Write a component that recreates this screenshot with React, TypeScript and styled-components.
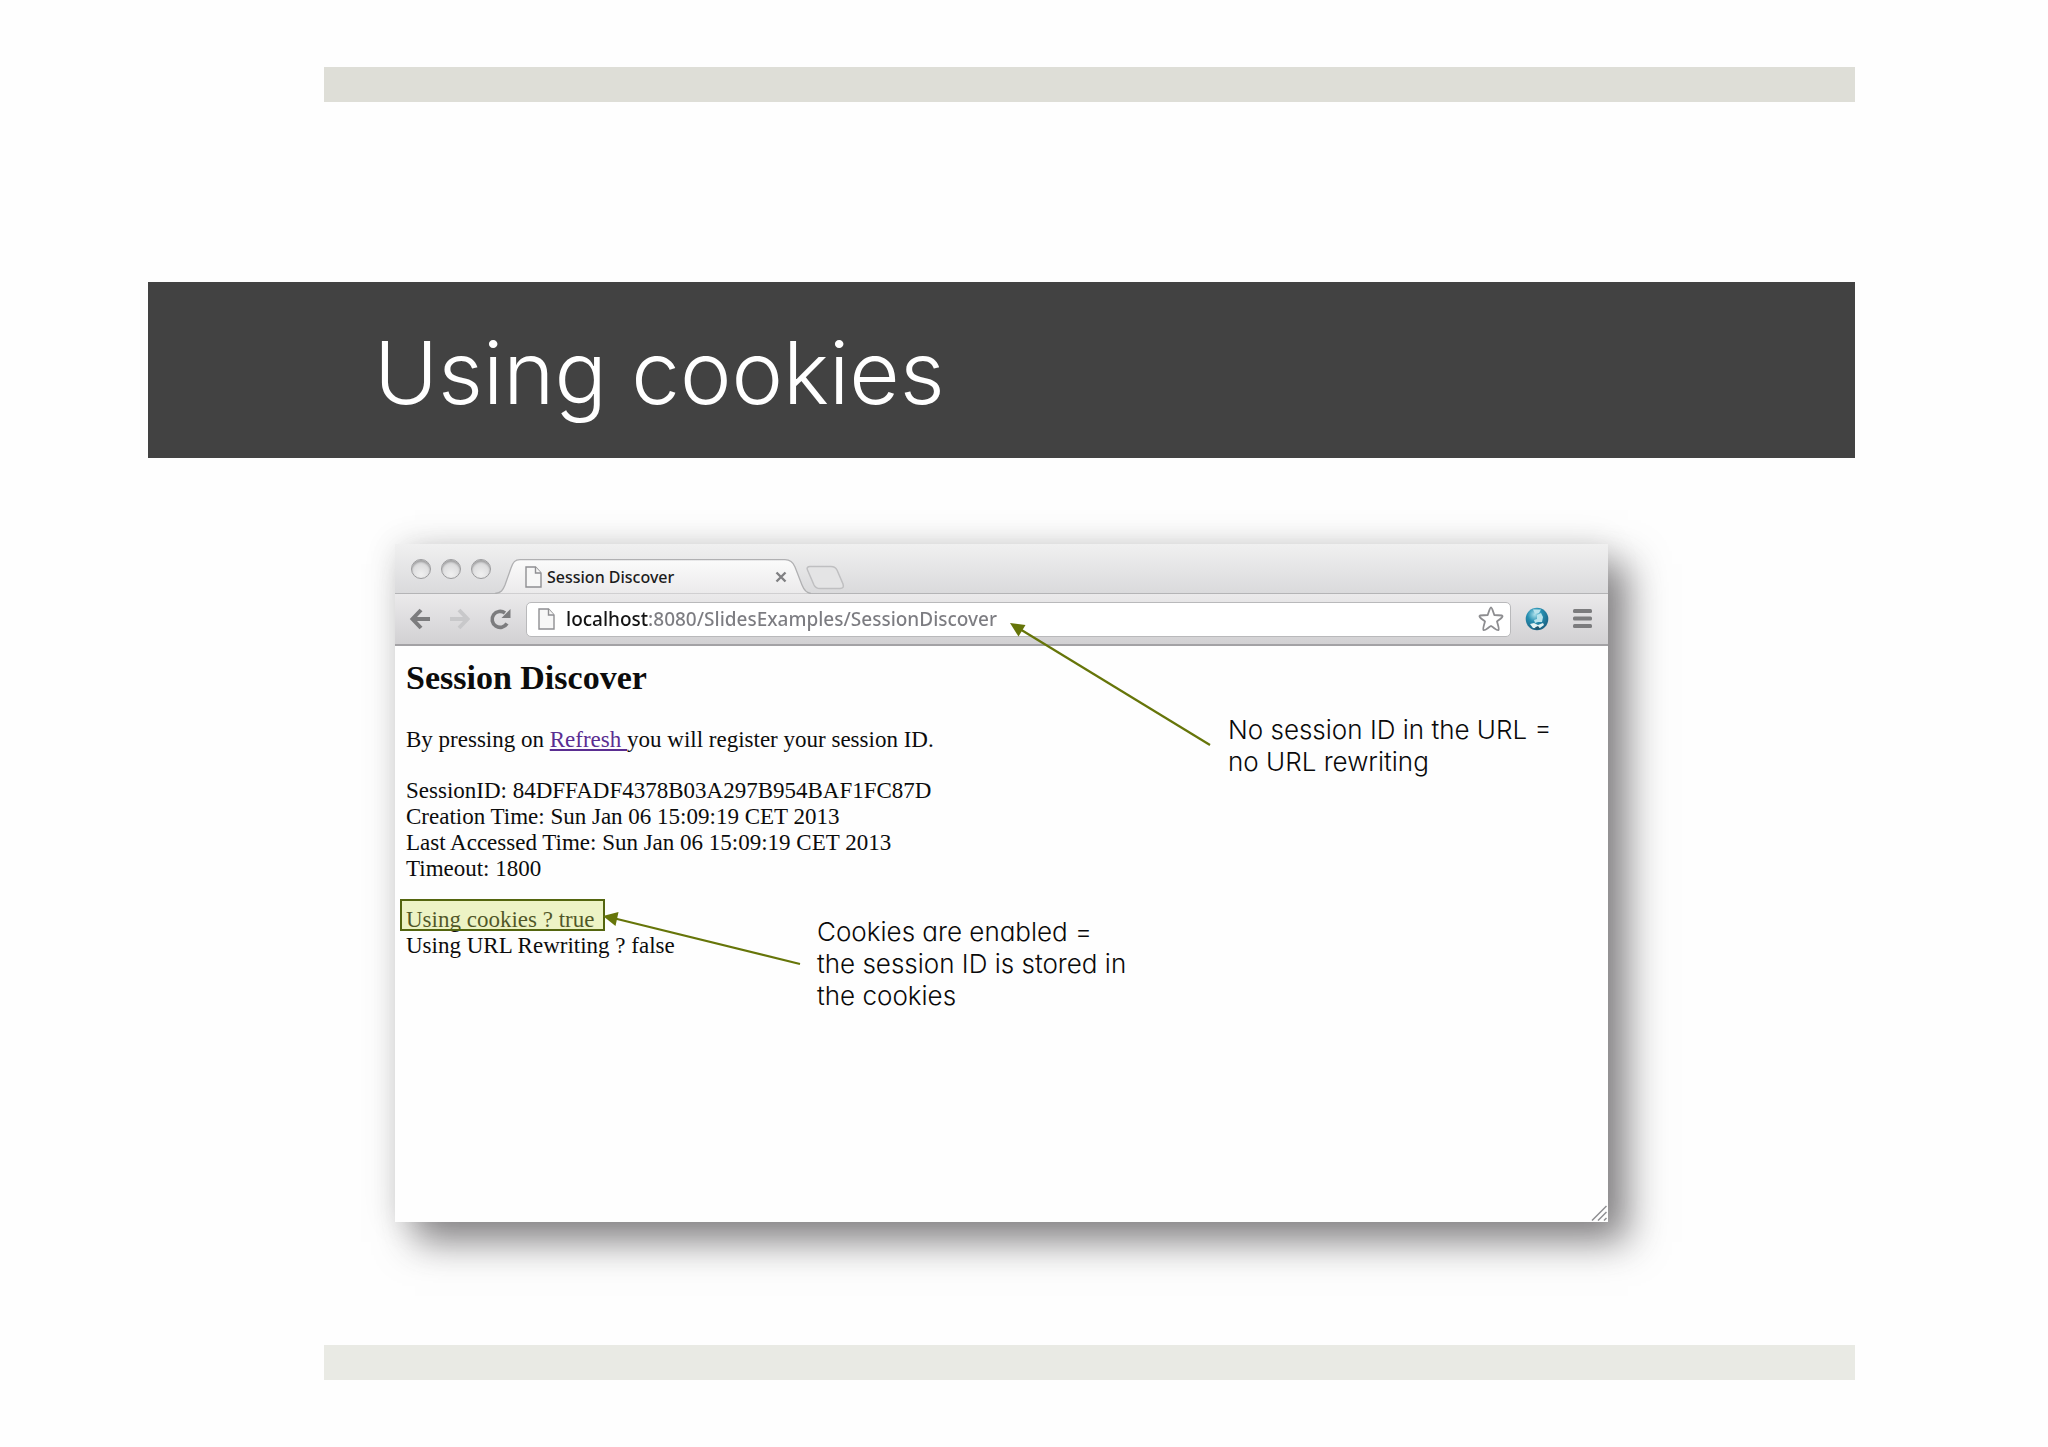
import React from "react";
import styled, { createGlobalStyle } from "styled-components";

const GlobalStyle = createGlobalStyle`
  *, *::before, *::after { box-sizing: border-box; }
  body { margin: 0; background: #fefefe; }
`;

const gothic = `Inter, "Century Gothic", "Liberation Sans", sans-serif`;
const ui = `"Lucida Grande", "Noto Sans", "Open Sans", sans-serif`;
const serif = `"Liberation Serif", "Times New Roman", serif`;

const Slide = styled.main`
  min-height: 100vh;
  display: grid;
  grid-template-columns: 148fr 176fr 71fr 1213fr 247fr 193fr;
  align-content: start;
  padding: 67px 0;
`;

const Stripe = styled.div<{ $tone: string }>`
  grid-column: 3 / 6;
  height: 35px;
  background: ${(p) => p.$tone};
`;

const TitleBand = styled.header`
  grid-column: 2 / 6;
  display: grid;
  grid-template-columns: 176fr 1531fr;
  align-items: center;
  height: 176px;
  margin-top: 180px;
  padding-top: 6px;
  background: #424242;
`;

const Title = styled.h1`
  grid-column: 2;
  margin: 0;
  padding-left: 50px;
  color: #fff;
  font: 300 87px/108px ${gothic};
`;

const Figure = styled.section`
  grid-column: 4;
  margin: 86px 0 123px;
  position: relative;
  background: #fefefe;
  box-shadow: 20px 20px 36px rgba(50, 45, 50, 0.57), 0 0 32px rgba(0, 0, 0, 0.11);
`;

const TabStrip = styled.div`
  display: flex;
  align-items: flex-end;
  height: 50px;
  padding-left: 16px;
  background: linear-gradient(#f0f0f0, #dadadc);
  border-bottom: 1px solid #b4b4b6;
`;

const Lights = styled.div`
  display: flex;
  gap: 10px;
  padding-bottom: 14px;
`;

const Light = styled.button`
  width: 20px;
  height: 20px;
  padding: 0;
  border: 1px solid #9b9b9d;
  border-radius: 50%;
  background: radial-gradient(circle at 50% 80%, #f0f0f0, #cfcfd1);
  box-shadow: inset 0 2px 2px rgba(0, 0, 0, 0.25);
`;

const Tab = styled.div`
  position: relative;
  display: flex;
  align-items: center;
  width: 316px;
  height: 35px;
  margin: 0 0 -1px 4px;
  padding: 0 24px 0 30px;
  gap: 5px;
`;

const TabShape = styled.svg`
  position: absolute;
  inset: 0;
`;

const TabLabel = styled.span`
  position: relative;
  flex: 1;
  color: #1c1c1c;
  font: 500 16px/20px ${ui};
  white-space: nowrap;
`;

const IconButton = styled.button`
  position: relative;
  display: flex;
  padding: 0;
  border: 0;
  background: none;
`;

const NewTab = styled(IconButton)`
  margin: 0 0 3px -6px;
`;

const Icon = styled.svg`
  position: relative;
  display: block;
  flex: none;
`;

const Toolbar = styled.div`
  display: flex;
  align-items: center;
  height: 52px;
  padding: 0 16px 0 14px;
  background: linear-gradient(#ebeaeb, #d2d1d3);
  border-bottom: 2px solid #a3a2a5;
`;

const Nav = styled.div`
  display: flex;
  gap: 18px;
  margin-right: 15px;
`;

const Omnibox = styled.label`
  display: flex;
  align-items: center;
  flex: 1;
  min-width: 0;
  height: 35px;
  padding: 0 6px 0 11px;
  gap: 11px;
  background: #fff;
  border: 1px solid #b9b9bb;
  border-radius: 5px;
`;

const Address = styled.input`
  flex: 1;
  min-width: 0;
  height: 28px;
  padding: 0;
  border: 0;
  outline: 0;
  font: 500 19px/28px ${ui};
  color: #7c7c81;
  background: linear-gradient(90deg, #141414 83px, #7c7c81 83px);
  background-clip: text;
  -webkit-background-clip: text;
  -webkit-text-fill-color: transparent;
`;

const Tools = styled.div`
  display: flex;
  align-items: center;
  gap: 24px;
  margin-left: 14px;
`;

const Page = styled.article`
  min-height: 576px;
  padding: 13px 11px;
  color: #0c0c0c;
  font: 400 23px/26px ${serif};
`;

const PageTitle = styled.h2`
  margin: 0 0 30px;
  font: 700 34px/38px ${serif};
`;

const Paragraph = styled.p`
  margin: 0 0 25px;
`;

const Refresh = styled.a`
  color: #5a2d91;
  white-space: pre;
`;

const Highlight = styled.div`
  position: absolute;
  left: 5px;
  top: 355px;
  width: 205px;
  height: 32px;
  border: 2px solid #54650f;
  background: rgba(205, 224, 92, 0.35);
`;

const Arrow = styled.svg<{ $x: number; $y: number }>`
  position: absolute;
  left: ${(p) => p.$x}px;
  top: ${(p) => p.$y}px;
`;

const Note = styled.p<{ $x: number; $y: number }>`
  position: absolute;
  left: ${(p) => p.$x}px;
  top: ${(p) => p.$y}px;
  margin: 0;
  color: #0a0a0a;
  font: 300 26px/32px ${gothic};
  font-feature-settings: "cv11";
  white-space: nowrap;
`;

const PageIcon = () => (
  <Icon width="17" height="22" viewBox="0 0 17 22" fill="#f7f7f7" stroke="#8f8f92" strokeWidth="1.4">
    <path d="M1 1H10.500L16 7V21H1Z" />
    <path d="M10.500 1V7H16" />
  </Icon>
);

export default function App() {
  return (
    <>
      <GlobalStyle />
      <Slide>
        <Stripe $tone="#deded7" />
        <TitleBand>
          <Title>Using cookies</Title>
        </TitleBand>
        <Figure>
          <TabStrip>
            <Lights>
              <Light aria-label="Close window" />
              <Light aria-label="Minimise window" />
              <Light aria-label="Zoom window" />
            </Lights>
            <Tab>
              <TabShape width="316" height="35" viewBox="0 0 316 35">
                <defs>
                  <linearGradient id="tabFill" x1="0" y1="0" x2="0" y2="1">
                    <stop offset="0" stopColor="#fbfbfb" />
                    <stop offset="1" stopColor="#ebeaeb" />
                  </linearGradient>
                </defs>
                <path
                  d="M0 34.500C6 34 8 31 10 26L16 9C18 3 20 .7 25 .7H290C295 .7 298 3 300 8L307 26C309 31 311 34 316 34.500"
                  fill="url(#tabFill)"
                  stroke="#b0b0b2"
                  strokeWidth="1.300"
                />
              </TabShape>
              <PageIcon />
              <TabLabel>Session Discover</TabLabel>
              <IconButton aria-label="Close tab">
                <Icon width="12" height="12" viewBox="0 0 12 12" stroke="#808083" strokeWidth="2.400">
                  <path d="M1.500 1.500L10.500 10.500M10.500 1.500L1.500 10.500" />
                </Icon>
              </IconButton>
            </Tab>
            <NewTab aria-label="New tab">
              <Icon width="40" height="25" viewBox="0 0 40 25" fill="#e4e4e5" stroke="#bfbfc1" strokeWidth="1.500">
                <path d="M5 1.500H26C29 1.500 31 3 32 5L38 19C39 22 38 23.500 35 23.500H15C12 23.500 10 22 9 20L2.500 5C1.500 3 2.500 1.500 5 1.500Z" />
              </Icon>
            </NewTab>
          </TabStrip>
          <Toolbar>
            <Nav>
              <IconButton aria-label="Back">
                <Icon width="22" height="22" viewBox="0 0 22 22" fill="none" stroke="#7c7c7e" strokeWidth="4">
                  <path d="M21 11H4M12 2L3.500 11L12 20" />
                </Icon>
              </IconButton>
              <IconButton aria-label="Forward">
                <Icon width="22" height="22" viewBox="0 0 22 22" fill="none" stroke="#c8c8ca" strokeWidth="4">
                  <path d="M1 11H18M10 2L18.500 11L10 20" />
                </Icon>
              </IconButton>
              <IconButton aria-label="Reload">
                <Icon width="22" height="22" viewBox="0 0 22 22" fill="none" stroke="#7c7c7e" strokeWidth="3.600">
                  <path d="M18 15.500A8 8 0 1 1 16 5" />
                  <path d="M21.500 1V10H12.500Z" fill="#7c7c7e" stroke="none" />
                </Icon>
              </IconButton>
            </Nav>
            <Omnibox>
              <PageIcon />
              <Address aria-label="Address" defaultValue="localhost:8080/SlidesExamples/SessionDiscover" />
              <IconButton aria-label="Bookmark this page">
                <Icon width="26" height="26" viewBox="0 0 26 26" fill="#fff" stroke="#8d8d90" strokeWidth="1.800" strokeLinejoin="round">
                  <path d="M13 1.500C14 1.500 15 5 16.300 9L24 9.500C26 10.500 22 13 19 15.500C20 19 21.500 23 20.500 24C19 25 16 21.500 13 20C10 21.500 7 25 5.500 24C4.500 23 6 19 7 15.500C4 13 0 10.500 2 9.500L9.700 9C11 5 12 1.500 13 1.500Z" />
                </Icon>
              </IconButton>
            </Omnibox>
            <Tools>
              <IconButton aria-label="Web extension">
                <Icon width="24" height="24" viewBox="0 0 24 24">
                  <defs>
                    <radialGradient id="globeFill" cx="0.4" cy="0.3" r="0.7">
                      <stop offset="0" stopColor="#a9dfea" />
                      <stop offset="0.45" stopColor="#2790b2" />
                      <stop offset="1" stopColor="#1b6283" />
                    </radialGradient>
                  </defs>
                  <circle cx="12" cy="12" r="11.300" fill="url(#globeFill)" />
                  <path d="M8 2.500L16 2.500L14 6L10 7ZM12 8L16 6L18 10L17 15L13 15L10 16L9 13L12 12Z" fill="#b9e3ec" />
                  <path d="M5 17L9 16L13 18L18 16L19 18L15 21L8 21Z" fill="#e3f2f3" />
                  <path d="M10 20.500L13 19L15 21.500L11.500 23Z" fill="#20566d" />
                </Icon>
              </IconButton>
              <IconButton aria-label="Menu">
                <Icon width="19" height="20" viewBox="0 0 19 20" fill="#7c7c7e">
                  <rect width="19" height="4" rx="1.500" />
                  <rect y="7.500" width="19" height="4" rx="1.500" />
                  <rect y="15" width="19" height="4" rx="1.500" />
                </Icon>
              </IconButton>
            </Tools>
          </Toolbar>
          <Page>
            <PageTitle>Session Discover</PageTitle>
            <Paragraph>
              By pressing on <Refresh href="#refresh">{"Refresh "}</Refresh>you will register your session ID.
            </Paragraph>
            <Paragraph>
              SessionID: 84DFFADF4378B03A297B954BAF1FC87D
              <br />
              Creation Time: Sun Jan 06 15:09:19 CET 2013
              <br />
              Last Accessed Time: Sun Jan 06 15:09:19 CET 2013
              <br />
              Timeout: 1800
            </Paragraph>
            <Paragraph>
              Using cookies ? true
              <br />
              Using URL Rewriting ? false
            </Paragraph>
          </Page>
          <Highlight />
          <Arrow $x={615} $y={79} width="202" height="124" viewBox="0 0 202 124">
            <path d="M9 5.500L200 122" stroke="#667509" strokeWidth="2.200" />
            <path d="M0 0L15.500 2L8.500 13.500Z" fill="#667509" />
          </Arrow>
          <Arrow $x={208} $y={364} width="200" height="58" viewBox="0 0 200 58">
            <path d="M10 10L197 56" stroke="#667509" strokeWidth="2.200" />
            <path d="M0 8L15.500 4L12.500 18Z" fill="#667509" />
          </Arrow>
          <Note $x={833} $y={170}>
            No session ID in the URL =<br />
            no URL rewriting
          </Note>
          <Note $x={422} $y={372}>
            Cookies are enabled =<br />
            the session ID is stored in
            <br />
            the cookies
          </Note>
          <Arrow $x={1196} $y={661} width="16" height="16" viewBox="0 0 16 16" stroke="#8f8f92" strokeWidth="1.500">
            <path d="M1 15.500L15.500 1M7 15.500L15.500 7M13 15.500L15.500 13" />
          </Arrow>
        </Figure>
        <Stripe $tone="#e9eae4" />
      </Slide>
    </>
  );
}
